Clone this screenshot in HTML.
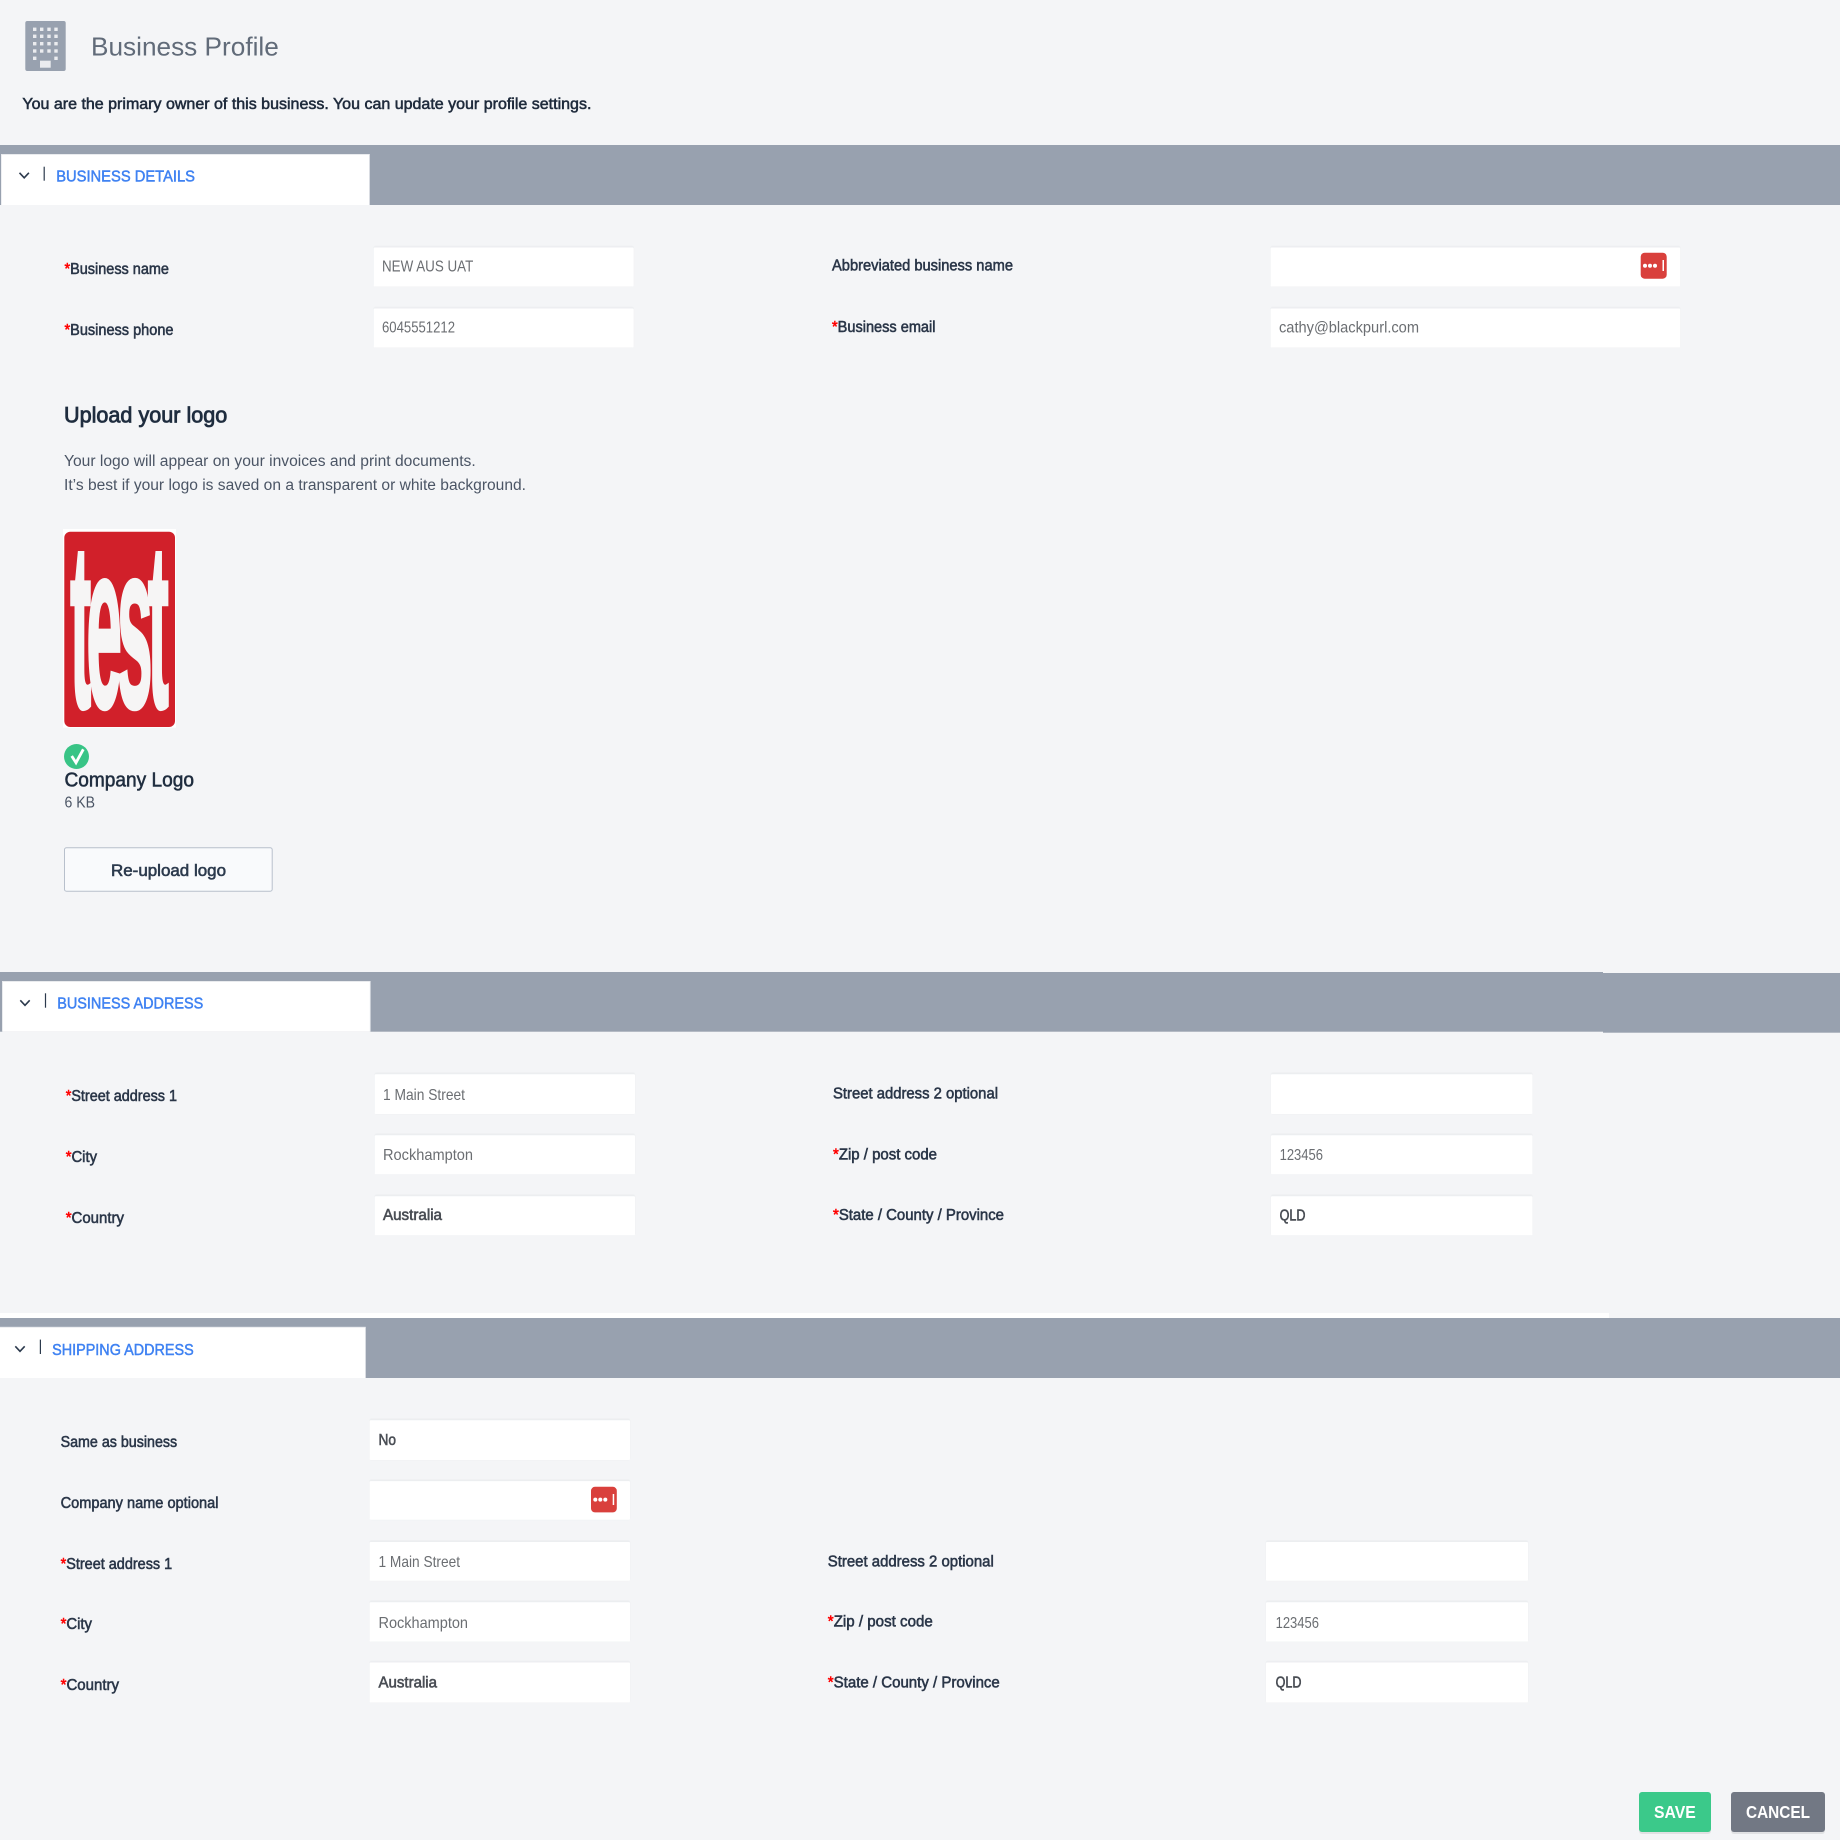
<!DOCTYPE html>
<html lang="en">
<head>
<meta charset="utf-8">
<title>Business Profile</title>
<style>
html,body{margin:0;padding:0;background:#f4f5f7;width:1840px;height:1840px;overflow:hidden}
svg{display:block}
text{font-family:"Liberation Sans",sans-serif}
.l{font-size:15.5px;fill:#2a3648;stroke:#2a3648;stroke-width:.55}
.v{font-size:16px;fill:#6b6e72}
.b{font-size:15.5px;fill:#4a4e55;stroke:#4a4e55;stroke-width:.6}
.h{font-size:16px;fill:#3f82f2;stroke:#3f82f2;stroke-width:.5}
.p{font-size:15.5px;fill:#4b5565}
.s{fill:#f00;stroke:#f00}
.bar{fill:#98a1af}
.fo{fill:#eceef0;stroke:#eef0f2;stroke-width:.8}
.fi{fill:#fff}
.ch{fill:none;stroke:#2c3a4d;stroke-width:1.6}
</style>
</head>
<body>
<svg width="1840" height="1840" viewBox="0 0 1840 1840" xmlns="http://www.w3.org/2000/svg">
<rect width="1840" height="1840" fill="#f4f5f7"/>

<!-- header icon -->
<rect x="25.3" y="21" width="40.4" height="50" rx="2" fill="#98a1af"/>
<g fill="#f4f5f7" opacity=".9">
<rect x="33" y="27.6" width="3.4" height="3.4"/><rect x="40" y="27.6" width="3.4" height="3.4"/><rect x="47.3" y="27.6" width="3.4" height="3.4"/><rect x="54.3" y="27.6" width="3.4" height="3.4"/>
<rect x="33" y="34.6" width="3.4" height="3.4"/><rect x="40" y="34.6" width="3.4" height="3.4"/><rect x="47.3" y="34.6" width="3.4" height="3.4"/><rect x="54.3" y="34.6" width="3.4" height="3.4"/>
<rect x="33" y="42" width="3.4" height="3.4"/><rect x="40" y="42" width="3.4" height="3.4"/><rect x="47.3" y="42" width="3.4" height="3.4"/><rect x="54.3" y="42" width="3.4" height="3.4"/>
<rect x="33" y="49.3" width="3.4" height="3.4"/><rect x="40" y="49.3" width="3.4" height="3.4"/><rect x="47.3" y="49.3" width="3.4" height="3.4"/><rect x="54.3" y="49.3" width="3.4" height="3.4"/>
<rect x="33" y="56.6" width="3.4" height="3.4"/><rect x="54.3" y="56.6" width="3.4" height="3.4"/>
<rect x="40" y="60.7" width="10.7" height="7"/>
</g>
<text x="91" y="55.7" font-size="26" fill="#616b79" textLength="187.8" lengthAdjust="spacingAndGlyphs">Business Profile</text>
<text x="22.4" y="109" font-size="16" fill="#1f2b3c" stroke="#1f2b3c" stroke-width=".55" textLength="569" lengthAdjust="spacingAndGlyphs">You are the primary owner of this business. You can update your profile settings.</text>

<!-- BAR 1 -->
<rect class="bar" x="0" y="145" width="1840" height="60"/>
<rect x="1" y="154" width="368.8" height="51" fill="#e9ebee"/>
<rect x="1.8" y="155" width="367.2" height="50" fill="#fff"/>
<path class="ch" d="M19.5 172.8l4.7 5 4.7-5"/>
<rect x="43.6" y="166.7" width="1.2" height="14" fill="#2c3a4d"/>
<text class="h" x="56.2" y="181.7" textLength="138.8" lengthAdjust="spacingAndGlyphs">BUSINESS DETAILS</text>

<text class="l" x="64.5" y="274" textLength="104.5" lengthAdjust="spacingAndGlyphs"><tspan class="s">*</tspan>Business name</text>
<text class="l" x="64.5" y="335" textLength="109" lengthAdjust="spacingAndGlyphs"><tspan class="s">*</tspan>Business phone</text>
<rect class="fo" x="373.7" y="246" width="260" height="40.5" rx="2"/><rect class="fi" x="373.7" y="247.5" width="260" height="39" rx="1"/>
<rect class="fo" x="373.7" y="307" width="260" height="40.5" rx="2"/><rect class="fi" x="373.7" y="308.5" width="260" height="39" rx="1"/>
<text class="v" x="382" y="271.6" textLength="91.3" lengthAdjust="spacingAndGlyphs">NEW AUS UAT</text>
<text class="v" x="382" y="332.6" textLength="73" lengthAdjust="spacingAndGlyphs">6045551212</text>

<text class="l" x="832" y="270.7" textLength="181" lengthAdjust="spacingAndGlyphs">Abbreviated business name</text>
<text class="l" x="832" y="332" textLength="103.5" lengthAdjust="spacingAndGlyphs"><tspan class="s">*</tspan>Business email</text>
<rect class="fo" x="1270.6" y="246" width="409.6" height="40.5" rx="2"/><rect class="fi" x="1270.6" y="247.5" width="409.6" height="39" rx="1"/>
<rect class="fo" x="1270.6" y="307" width="409.6" height="40.5" rx="2"/><rect class="fi" x="1270.6" y="308.5" width="409.6" height="39" rx="1"/>
<text class="v" x="1279" y="332.6" textLength="140" lengthAdjust="spacingAndGlyphs">cathy@blackpurl.com</text>
<rect x="1640.7" y="252.7" width="26" height="26" rx="4" fill="#d9403c"/>
<g fill="#fff"><circle cx="1645" cy="265.7" r="2"/><circle cx="1650" cy="265.7" r="2"/><circle cx="1655" cy="265.7" r="2"/><rect x="1662.5" y="260" width="1.5" height="11"/></g>

<!-- Upload -->
<text x="64" y="422.7" font-size="22" fill="#1f2d3f" stroke="#1f2d3f" stroke-width=".8" textLength="163.3" lengthAdjust="spacingAndGlyphs">Upload your logo</text>
<text class="p" x="64" y="466" textLength="411.7" lengthAdjust="spacingAndGlyphs">Your logo will appear on your invoices and print documents.</text>
<text class="p" x="64" y="490" textLength="462" lengthAdjust="spacingAndGlyphs">It’s best if your logo is saved on a transparent or white background.</text>

<rect x="63" y="529" width="113" height="198.7" fill="#fff"/>
<rect x="64.3" y="531.7" width="110.7" height="195.3" rx="6" fill="#d1202a"/>
<text transform="translate(70,707) scale(.272,1)" font-size="236" font-weight="700" fill="#f6f5f5" stroke="#f6f5f5" stroke-width="4" textLength="364" lengthAdjust="spacing">test</text>

<circle cx="76.5" cy="756.5" r="12.5" fill="#38c486"/>
<path d="M71.7 756l4.3 6.7 7.3-13.4" fill="none" stroke="#fff" stroke-width="2.8"/>
<text x="64.5" y="786.5" font-size="20" fill="#1f2d3f" stroke="#1f2d3f" stroke-width=".55" textLength="129.5" lengthAdjust="spacingAndGlyphs">Company Logo</text>
<text class="p" x="64.5" y="807.5" textLength="30.5" lengthAdjust="spacingAndGlyphs">6 KB</text>
<rect x="64.5" y="847.8" width="207.7" height="43.4" rx="2" fill="#f9fafc" stroke="#b8c0cc" stroke-width="1"/>
<text x="111" y="876" font-size="17" fill="#2c3a4d" stroke="#2c3a4d" stroke-width=".6" textLength="115" lengthAdjust="spacingAndGlyphs">Re-upload logo</text>

<!-- BAR 2 -->
<rect class="bar" x="0" y="972" width="1603" height="59.7"/>
<rect class="bar" x="1603" y="973" width="237" height="59.7"/>
<rect x="2" y="981" width="368.6" height="50.7" fill="#e9ebee"/>
<rect x="3" y="982" width="366.8" height="49.7" fill="#fff"/>
<path class="ch" d="M20.3 1000.3l4.7 5 4.7-5"/>
<rect x="44.9" y="993.3" width="1.2" height="14.4" fill="#2c3a4d"/>
<text class="h" x="57.2" y="1008.7" textLength="146.1" lengthAdjust="spacingAndGlyphs">BUSINESS ADDRESS</text>

<text class="l" x="65.7" y="1100.8" textLength="111.3" lengthAdjust="spacingAndGlyphs"><tspan class="s">*</tspan>Street address 1</text>
<text class="l" x="65.7" y="1162" textLength="31.3" lengthAdjust="spacingAndGlyphs"><tspan class="s">*</tspan>City</text>
<text class="l" x="65.7" y="1223" textLength="58.3" lengthAdjust="spacingAndGlyphs"><tspan class="s">*</tspan>Country</text>
<rect class="fo" x="374.7" y="1072.7" width="260.3" height="41.3" rx="2"/><rect class="fi" x="374.7" y="1074.2" width="260.3" height="39.8" rx="1"/>
<rect class="fo" x="374.7" y="1133.7" width="260.3" height="40.5" rx="2"/><rect class="fi" x="374.7" y="1135.2" width="260.3" height="39" rx="1"/>
<rect class="fo" x="374.7" y="1194.7" width="260.3" height="40.5" rx="2"/><rect class="fi" x="374.7" y="1196.2" width="260.3" height="39" rx="1"/>
<text class="v" x="383" y="1099.8" textLength="82" lengthAdjust="spacingAndGlyphs">1 Main Street</text>
<text class="v" x="383" y="1159.8" textLength="90" lengthAdjust="spacingAndGlyphs">Rockhampton</text>
<text class="b" x="383" y="1220" textLength="59" lengthAdjust="spacingAndGlyphs">Australia</text>

<text class="l" x="833" y="1098.3" textLength="165" lengthAdjust="spacingAndGlyphs">Street address 2 optional</text>
<text class="l" x="833" y="1159.3" textLength="104" lengthAdjust="spacingAndGlyphs"><tspan class="s">*</tspan>Zip / post code</text>
<text class="l" x="833" y="1220" textLength="171" lengthAdjust="spacingAndGlyphs"><tspan class="s">*</tspan>State / County / Province</text>
<rect class="fo" x="1271" y="1072.7" width="261.5" height="41.3" rx="2"/><rect class="fi" x="1271" y="1074.2" width="261.5" height="39.8" rx="1"/>
<rect class="fo" x="1271" y="1133.7" width="261.5" height="40.5" rx="2"/><rect class="fi" x="1271" y="1135.2" width="261.5" height="39" rx="1"/>
<rect class="fo" x="1271" y="1194.7" width="261.5" height="40.5" rx="2"/><rect class="fi" x="1271" y="1196.2" width="261.5" height="39" rx="1"/>
<text class="v" x="1279.6" y="1160" textLength="43.4" lengthAdjust="spacingAndGlyphs">123456</text>
<text class="b" x="1279.6" y="1220.3" textLength="25.8" lengthAdjust="spacingAndGlyphs">QLD</text>

<!-- BAR 3 -->
<rect x="0" y="1313" width="1609" height="5" fill="#fff"/>
<rect class="bar" x="0" y="1318" width="1840" height="60"/>
<rect x="0" y="1326.8" width="365.8" height="51.2" fill="#e9ebee"/>
<rect x="0" y="1327.8" width="365" height="50.2" fill="#fff"/>
<path class="ch" d="M15.3 1346.3l4.7 5 4.7-5"/>
<rect x="39.8" y="1339.6" width="1.2" height="14.4" fill="#2c3a4d"/>
<text class="h" x="52.1" y="1355" textLength="141.6" lengthAdjust="spacingAndGlyphs">SHIPPING ADDRESS</text>

<text class="l" x="60.6" y="1447.2" textLength="116.6" lengthAdjust="spacingAndGlyphs">Same as business</text>
<text class="l" x="60.6" y="1508" textLength="157.9" lengthAdjust="spacingAndGlyphs">Company name optional</text>
<text class="l" x="60.6" y="1569" textLength="111.6" lengthAdjust="spacingAndGlyphs"><tspan class="s">*</tspan>Street address 1</text>
<text class="l" x="60.6" y="1629" textLength="31.4" lengthAdjust="spacingAndGlyphs"><tspan class="s">*</tspan>City</text>
<text class="l" x="60.6" y="1690" textLength="58.4" lengthAdjust="spacingAndGlyphs"><tspan class="s">*</tspan>Country</text>

<rect class="fo" x="369.6" y="1418.7" width="260.4" height="41.3" rx="2"/><rect class="fi" x="369.6" y="1420.2" width="260.4" height="39.8" rx="1"/>
<rect class="fo" x="369.6" y="1479.6" width="260.4" height="40.2" rx="2"/><rect class="fi" x="369.6" y="1481.1" width="260.4" height="38.7" rx="1"/>
<rect class="fo" x="369.6" y="1540.5" width="260.4" height="40.2" rx="2"/><rect class="fi" x="369.6" y="1542" width="260.4" height="38.7" rx="1"/>
<rect class="fo" x="369.6" y="1600.7" width="260.4" height="40.9" rx="2"/><rect class="fi" x="369.6" y="1602.2" width="260.4" height="39.4" rx="1"/>
<rect class="fo" x="369.6" y="1661" width="260.4" height="41.5" rx="2"/><rect class="fi" x="369.6" y="1662.5" width="260.4" height="40" rx="1"/>
<text class="b" x="378.5" y="1444.8" textLength="17.5" lengthAdjust="spacingAndGlyphs">No</text>
<rect x="591" y="1486.8" width="25.8" height="25.6" rx="4" fill="#d9403c"/>
<g fill="#fff"><circle cx="595.3" cy="1499.6" r="2"/><circle cx="600.3" cy="1499.6" r="2"/><circle cx="605.3" cy="1499.6" r="2"/><rect x="612.7" y="1494" width="1.5" height="11"/></g>
<text class="v" x="378.5" y="1567" textLength="81.5" lengthAdjust="spacingAndGlyphs">1 Main Street</text>
<text class="v" x="378.5" y="1627.8" textLength="89.5" lengthAdjust="spacingAndGlyphs">Rockhampton</text>
<text class="b" x="378.5" y="1687.7" textLength="58.5" lengthAdjust="spacingAndGlyphs">Australia</text>

<text class="l" x="827.8" y="1566.5" textLength="166" lengthAdjust="spacingAndGlyphs">Street address 2 optional</text>
<text class="l" x="827.8" y="1626.5" textLength="105" lengthAdjust="spacingAndGlyphs"><tspan class="s">*</tspan>Zip / post code</text>
<text class="l" x="827.8" y="1687.5" textLength="172" lengthAdjust="spacingAndGlyphs"><tspan class="s">*</tspan>State / County / Province</text>
<rect class="fo" x="1266" y="1540.5" width="262" height="40.2" rx="2"/><rect class="fi" x="1266" y="1542" width="262" height="38.7" rx="1"/>
<rect class="fo" x="1266" y="1600.7" width="262" height="40.9" rx="2"/><rect class="fi" x="1266" y="1602.2" width="262" height="39.4" rx="1"/>
<rect class="fo" x="1266" y="1661" width="262" height="41.5" rx="2"/><rect class="fi" x="1266" y="1662.5" width="262" height="40" rx="1"/>
<text class="v" x="1275.6" y="1627.8" textLength="43.4" lengthAdjust="spacingAndGlyphs">123456</text>
<text class="b" x="1275.6" y="1687.7" textLength="25.8" lengthAdjust="spacingAndGlyphs">QLD</text>

<!-- Buttons -->
<rect x="1639" y="1794" width="72" height="40" rx="3" fill="#000" opacity=".08"/>
<rect x="1731" y="1794" width="94" height="40" rx="3" fill="#000" opacity=".08"/>
<rect x="1639" y="1792" width="72" height="40" rx="3" fill="#3bc98a"/>
<rect x="1731" y="1792" width="94" height="40" rx="3" fill="#727884"/>
<text x="1654" y="1818" font-size="17.5" font-weight="700" fill="#fff" textLength="41.7" lengthAdjust="spacingAndGlyphs">SAVE</text>
<text x="1746" y="1818" font-size="17.5" font-weight="700" fill="#fff" textLength="64" lengthAdjust="spacingAndGlyphs">CANCEL</text>
</svg>
</body>
</html>
